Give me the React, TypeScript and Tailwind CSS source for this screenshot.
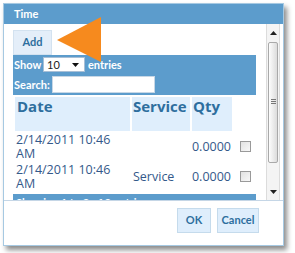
import React from "react";

const rows = [
  { date: "2/14/2011 10:46", ampm: "AM", service: "", qty: "0.0000" },
  { date: "2/14/2011 10:46", ampm: "AM", service: "Service", qty: "0.0000" },
];

const lato = { fontFamily: '"Lato", "Open Sans", sans-serif' };

const Checkbox = () => (
  <span className="block w-[11px] h-[11px] border border-[#9a9a9a] bg-gradient-to-br from-[#e2e2e2] to-[#f8f8f8]" />
);

const Scrollbar = () => (
  <div className="w-[14px] flex flex-col border-x border-[#dcdcdc] bg-[#f4f4f4]">
    {/* up arrow */}
    <div className="h-[17px] flex items-center justify-center">
      <svg width="7" height="4" viewBox="0 0 7 4">
        <polygon points="0,4 7,4 3.5,0" fill="#222" />
      </svg>
    </div>
    {/* thumb */}
    <div className="mt-[1px] h-[121px] mx-[1px] border border-[#a9a9a9] rounded-[2px] bg-gradient-to-r from-[#fdfdfd] to-[#dcdcdc] flex flex-col items-center pt-[56px] gap-[1px]">
      <span className="block w-[5px] h-px bg-[#777]" />
      <span className="block w-[5px] h-px bg-[#777]" />
      <span className="block w-[5px] h-px bg-[#777]" />
    </div>
    <div className="flex-1" />
    {/* down arrow */}
    <div className="h-[17px] flex items-center justify-center">
      <svg width="7" height="4" viewBox="0 0 7 4">
        <polygon points="0,0 7,0 3.5,4" fill="#222" />
      </svg>
    </div>
  </div>
);

const App = () => {
  return (
    <div
      className="w-[295px] h-[253px] bg-white pt-[3px] pl-[3px] relative"
      style={{ fontFamily: '"Open Sans", "DejaVu Sans", sans-serif' }}
    >
      {/* Dialog */}
      <div className="w-[281px] h-[243px] border border-[#a6c9e2] bg-white flex flex-col shadow-[3px_4px_5px_rgba(0,0,0,0.45)]">
        {/* Title */}
        <div className="h-[20px] bg-[#5c9ccc] text-white font-bold text-[11px] leading-[20px] pl-[10px]" style={lato}>
          Time
        </div>

        {/* Scroll region */}
        <div className="h-[177px] flex border-b border-[#c5d6e6] overflow-hidden">
          <div className="w-[262px] pl-[9px] pt-[4px] overflow-hidden">
            <button
              className="w-[39px] h-[25px] bg-[#e4eef9] border border-[#d3e2f0] text-[#2e6e9e] font-bold text-[11px]"
              style={lato}
            >
              Add
            </button>

            {/* Toolbar */}
            <div className="w-[243px] h-[40px] bg-[#5c9ccc] text-white font-bold text-[11px] pl-[1px]" style={lato}>
              <div className="h-[20px] flex items-center">
                <span className="w-[29px]">Show</span>
                <div className="w-[42px] h-[15px] bg-white border border-[#a8bfd6] flex items-center justify-between pl-[3px] pr-[5px] text-[#222] font-normal">
                  <span>10</span>
                  <svg width="7" height="4" viewBox="0 0 7 4">
                    <polygon points="0,0 7,0 3.5,4" fill="#111" />
                  </svg>
                </div>
                <span className="ml-[3px]">entries</span>
              </div>
              <div className="h-[18px] mt-[1px] flex items-center">
                <span className="w-[38px]">Search:</span>
                <div className="w-[103px] h-[17px] bg-white border border-[#c7d7e6]" />
              </div>
            </div>

            {/* Table */}
            <div className="w-[243px] p-[2px] grid grid-cols-[115px_58px_40px_22px] gap-[2px] text-[12.5px] leading-[14px] text-[#34598a]">
              <div className="h-[34px] bg-[#dfeefc] text-[#2e6e9e] font-bold text-[15px] leading-[18px] pl-[2px]">Date</div>
              <div className="h-[34px] bg-[#dfeefc] text-[#2e6e9e] font-bold text-[15px] leading-[18px] pl-[1px]">Service</div>
              <div className="h-[34px] bg-[#dfeefc] text-[#2e6e9e] font-bold text-[15px] leading-[18px] pl-[1px]">Qty</div>
              <div />
              {rows.map((r, i) => (
                <React.Fragment key={i}>
                  <div className="h-[28px] pl-[1px]">
                    {r.date}
                    <br />
                    {r.ampm}
                  </div>
                  <div className="h-[28px] flex items-center pl-[1px]">{r.service}</div>
                  <div className="h-[28px] flex items-center justify-end pr-[1px]">{r.qty}</div>
                  <div className="h-[28px] flex items-center pl-[6px]">
                    <Checkbox />
                  </div>
                </React.Fragment>
              ))}
            </div>
            <div
              className="w-[243px] h-[20px] mt-[1px] bg-[#5c9ccc] text-white font-bold text-[11px] pl-[3px] pt-[1px]"
              style={lato}
            >
              Showing 1 to 2 of 2 entries
            </div>
          </div>
          <Scrollbar />
        </div>

        {/* Button pane */}
        <div className="flex-1 flex justify-end items-start gap-[6px] pt-[7px] pr-[24px]" style={lato}>
          <button className="w-[34px] h-[25px] bg-[#dfeefc] border border-[#c5dbec] text-[#2e6e9e] font-bold text-[11px]">
            OK
          </button>
          <button className="w-[42px] h-[25px] bg-[#dfeefc] border border-[#c5dbec] text-[#2e6e9e] font-bold text-[11px]">
            Cancel
          </button>
        </div>
      </div>

      {/* Orange callout arrow */}
      <svg className="absolute left-0 top-0" width="110" height="70" viewBox="0 0 110 70">
        <polygon points="57,40 101,17 101,62" fill="#f68a1e" />
      </svg>
    </div>
  );
};

export default App;
